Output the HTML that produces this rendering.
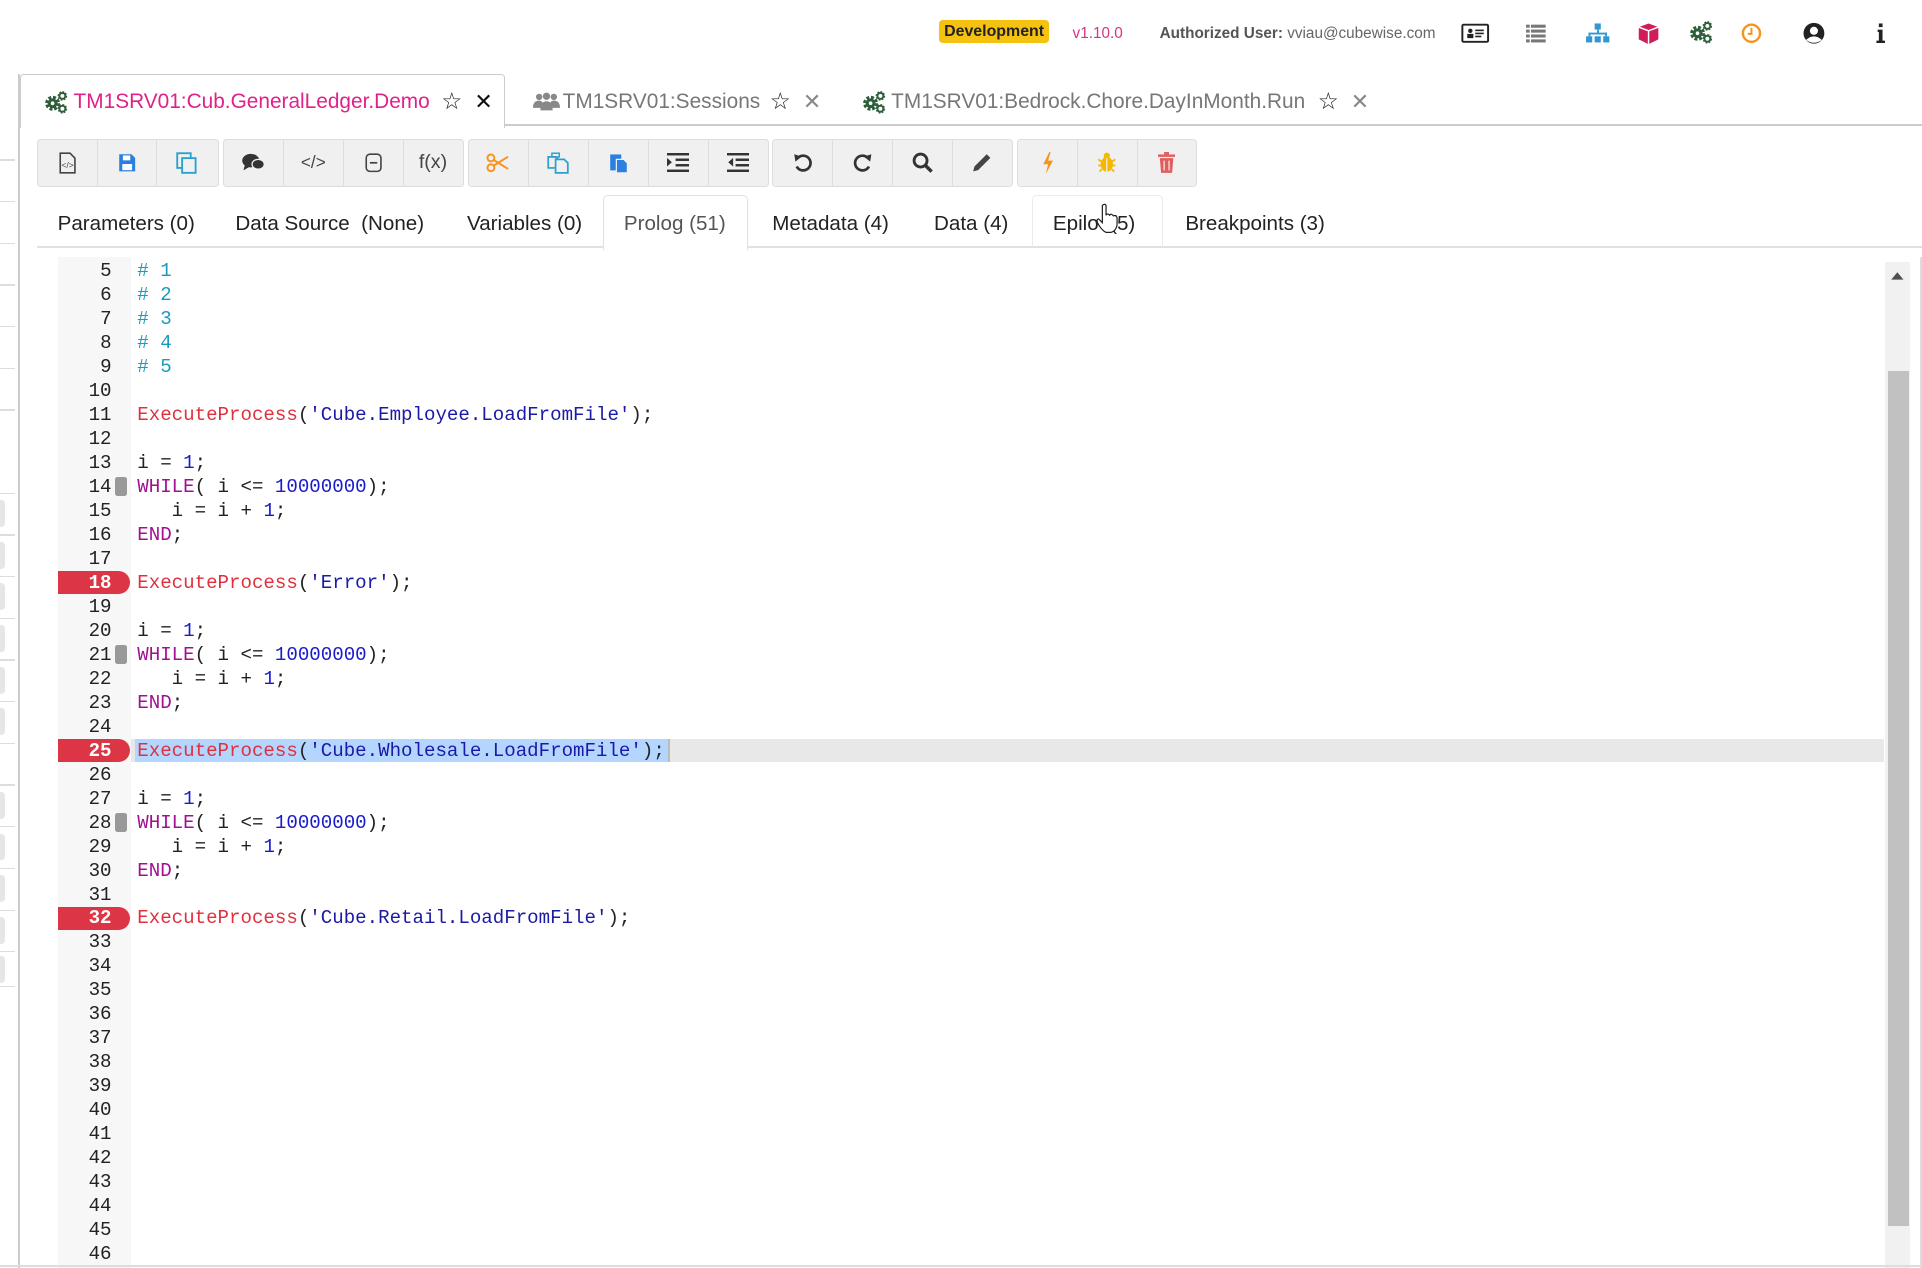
<!DOCTYPE html>
<html><head><meta charset="utf-8">
<style>
html,body{margin:0;padding:0;background:#fff;width:1922px;height:1268px;overflow:hidden}
#w{zoom:1.22577;width:1568px;height:1035px;position:relative;font-family:"Liberation Sans",sans-serif;color:#222;overflow:hidden}
.a{position:absolute}
.badge{left:766px;top:16px;width:90px;height:19px;background:#f5c211;border-radius:3px;font-weight:bold;font-size:13px;line-height:19px;text-align:center;color:#222}
.tab{font-size:17px;top:72px;line-height:22px;white-space:nowrap}
.tb{top:113px;height:38px;background:#f0f0f0;border:1px solid #ddd;border-radius:3px;display:flex}
.tb div{width:48px;border-right:1px solid #ddd;display:flex;align-items:center;justify-content:center;font-size:15px;color:#444}
.tb div:last-child{border-right:none}
.st{top:172px;font-size:16.8px;line-height:22px;color:#222;white-space:nowrap}
.code{font-family:"Liberation Mono",monospace;font-size:15.6px}
.ln{left:47px;width:44px;text-align:right;height:19.55px;line-height:19.55px;color:#222}
.cl{left:112px;height:19.55px;line-height:19.55px;white-space:pre;color:#222}
.c{color:#1b9ac0}.f{color:#e0303e}.s{color:#1a1aa6}.k{color:#a01090}.n{color:#1a1acc}
.bp{left:47px;width:59px;height:19px;background:#dc3545;border-radius:0 10px 10px 0}
.fold{left:94px;width:10px;height:16px;background:#999;border-radius:2px}
.tick{left:0;width:12px;height:1px;background:#ddd}
.box{left:0;width:4px;height:22px;background:#e6e6e6;border-radius:0 3px 3px 0}
</style></head><body><div id="w">

<svg width="0" height="0" style="position:absolute"><defs>
<g id="gears"><circle cx="7" cy="10" r="4" fill="#2e5e3a"/><circle cx="7" cy="10" r="4.8" fill="none" stroke="#2e5e3a" stroke-width="2.6" stroke-dasharray="2.4 1.4"/><circle cx="7" cy="10" r="1.5" fill="#fff"/>
<circle cx="15" cy="4" r="2.4" fill="none" stroke="#2e5e3a" stroke-width="1.6"/><circle cx="15" cy="4" r="3.2" fill="none" stroke="#2e5e3a" stroke-width="1.4" stroke-dasharray="1.4 1.1"/>
<circle cx="15" cy="14.5" r="2.4" fill="none" stroke="#2e5e3a" stroke-width="1.6"/><circle cx="15" cy="14.5" r="3.2" fill="none" stroke="#2e5e3a" stroke-width="1.4" stroke-dasharray="1.4 1.1"/></g>
</defs></svg>

<!-- header -->
<div class="a badge">Development</div>
<div class="a" style="left:875px;top:20px;font-size:12.5px;color:#d63384">v1.10.0</div>
<div class="a" style="left:946px;top:20px;font-size:12.5px;color:#666"><b style="color:#555">Authorized User:</b> vviau@cubewise.com</div>
<svg class="a" style="left:1192px;top:17px" width="360" height="20" viewBox="0 0 360 20">
 <rect x="1" y="3" width="21" height="14" fill="none" stroke="#222" stroke-width="1.6" rx="1"/><circle cx="7.5" cy="8" r="1.8" fill="#222"/><rect x="5" y="10.5" width="5" height="3.5" fill="#222"/><rect x="11.5" y="7" width="7" height="1.3" fill="#222"/><rect x="11.5" y="9.5" width="7" height="1.3" fill="#222"/><rect x="11.5" y="12" width="5" height="1.3" fill="#222"/>
 <g fill="#777"><rect x="53" y="3" width="3" height="2.5"/><rect x="57" y="3" width="12" height="2.5"/><rect x="53" y="7" width="3" height="2.5"/><rect x="57" y="7" width="12" height="2.5"/><rect x="53" y="11" width="3" height="2.5"/><rect x="57" y="11" width="12" height="2.5"/><rect x="53" y="15" width="3" height="2.5"/><rect x="57" y="15" width="12" height="2.5"/></g>
 <g fill="#2e97d4"><rect x="109" y="2" width="5" height="5"/><rect x="111" y="7" width="1.5" height="3"/><rect x="104" y="9.5" width="15" height="1.5"/><rect x="104" y="9.5" width="1.5" height="3"/><rect x="117.5" y="9.5" width="1.5" height="3"/><rect x="102" y="12.5" width="5" height="5"/><rect x="109" y="12.5" width="5" height="5"/><rect x="116" y="12.5" width="5" height="5"/></g>
 <path d="M153 2 L161 5 L161 15 L153 19 L145 15 L145 5Z" fill="#d01c5b"/><path d="M153 8 L161 5 M153 8 L145 5 M153 8 L153 19" stroke="#fff" stroke-width="1.2" fill="none"/>
 <use href="#gears" x="186" y="0"/>
 <circle cx="237" cy="10" r="7" fill="none" stroke="#f7941d" stroke-width="2"/><path d="M237 5.5 V10.5 H234" stroke="#f7941d" stroke-width="1.6" fill="none"/>
 <circle cx="288" cy="10" r="8.5" fill="#222"/><circle cx="288" cy="8" r="3.3" fill="#fff"/><path d="M281.5 15.5 Q288 9.5 294.5 15.5 Q288 20 281.5 15.5Z" fill="#fff"/>
 <rect x="341" y="2" width="3" height="3" fill="#222"/><path d="M340 7 H344 V16 H346 V18 H339 V16 H341 V9 H340Z" fill="#222"/>
</svg>

<!-- left sidebar remnants -->
<div class="a" style="left:15px;top:60px;width:1.5px;height:975px;background:#ccc"></div>
<div class="a tick" style="top:130px"></div><div class="a tick" style="top:164px"></div><div class="a tick" style="top:198px"></div><div class="a tick" style="top:232px"></div><div class="a tick" style="top:266px"></div><div class="a tick" style="top:300px"></div><div class="a tick" style="top:334px"></div><div class="a tick" style="top:402px"></div><div class="a tick" style="top:436px"></div><div class="a tick" style="top:470px"></div><div class="a tick" style="top:504px"></div><div class="a tick" style="top:538px"></div><div class="a tick" style="top:572px"></div><div class="a tick" style="top:606px"></div><div class="a tick" style="top:640px"></div><div class="a tick" style="top:674px"></div><div class="a tick" style="top:708px"></div><div class="a tick" style="top:742px"></div><div class="a tick" style="top:776px"></div><div class="a tick" style="top:804px"></div>
<div class="a box" style="top:408px"></div><div class="a box" style="top:442px"></div><div class="a box" style="top:476px"></div><div class="a box" style="top:510px"></div><div class="a box" style="top:544px"></div><div class="a box" style="top:578px"></div><div class="a box" style="top:646px"></div><div class="a box" style="top:680px"></div><div class="a box" style="top:714px"></div><div class="a box" style="top:748px"></div><div class="a box" style="top:780px"></div>

<!-- main tabs -->
<div class="a" style="left:410px;top:101px;width:1158px;height:2px;background:#ccc"></div>
<div class="a" style="left:16px;top:60px;width:394px;height:44px;border:1.5px solid #ccc;border-bottom:none;background:#fff;border-radius:3px 3px 0 0"></div>
<svg class="a" style="left:36px;top:74px" width="20" height="19"><use href="#gears"/></svg>
<div class="a tab" style="left:60px;top:73px;color:#e0218a">TM1SRV01:Cub.GeneralLedger.Demo</div>
<div class="a tab" style="left:360px;top:72px;font-size:19px">☆</div>
<div class="a tab" style="left:387px;top:73px;color:#111;font-size:18px">✕</div>
<svg class="a" style="left:435px;top:75px" width="22" height="16"><g fill="#888"><circle cx="5" cy="4" r="2.6"/><circle cx="11" cy="3.5" r="3"/><circle cx="17" cy="4" r="2.6"/><path d="M0 13 Q0 7 5 7 Q8 7 8 10 V13Z"/><path d="M6 15 Q6 7.5 11 7.5 Q16 7.5 16 15Z"/><path d="M22 13 Q22 7 17 7 Q14 7 14 10 V13Z"/></g></svg>
<div class="a tab" style="left:459px;top:73px;color:#777">TM1SRV01:Sessions</div>
<div class="a tab" style="left:628px;top:72px;font-size:19px">☆</div>
<div class="a tab" style="left:655px;top:73px;color:#888;font-size:18px">✕</div>
<svg class="a" style="left:703px;top:74px" width="20" height="19"><use href="#gears"/></svg>
<div class="a tab" style="left:727px;top:73px;color:#777">TM1SRV01:Bedrock.Chore.DayInMonth.Run</div>
<div class="a tab" style="left:1075px;top:72px;font-size:19px">☆</div>
<div class="a tab" style="left:1102px;top:73px;color:#888;font-size:18px">✕</div>

<!-- toolbar -->
<div class="a tb" style="left:30px;width:147px">
 <div><svg width="14" height="18"><path d="M1 1H9L13 5V17H1Z" fill="none" stroke="#444" stroke-width="1.3"/><text x="7" y="13" font-size="7" text-anchor="middle" fill="#444" font-family="Liberation Sans">&lt;/&gt;</text></svg></div>
 <div><svg width="15" height="16"><path d="M1 1H11L14 4V15H1Z" fill="#2a7fe0"/><rect x="4" y="2" width="6" height="4" fill="#fff"/><rect x="3.5" y="9" width="8" height="5" fill="#fff"/></svg></div>
 <div><svg width="18" height="18"><rect x="1" y="1" width="11" height="12" fill="none" stroke="#2aa0d0" stroke-width="1.5"/><rect x="5" y="5" width="11" height="12" fill="#f0f0f0" stroke="#2aa0d0" stroke-width="1.5"/></svg></div>
</div>
<div class="a tb" style="left:182px;width:195px">
 <div><svg width="20" height="17"><ellipse cx="8" cy="7" rx="7" ry="5.5" fill="#333"/><path d="M3 11 L2 15 L7 12Z" fill="#333"/><ellipse cx="14" cy="10" rx="5" ry="4" fill="#333" stroke="#f0f0f0"/></svg></div>
 <div style="font-size:14px">&lt;/&gt;</div>
 <div><svg width="14" height="16"><rect x="1" y="1" width="12" height="14" rx="3" fill="none" stroke="#444" stroke-width="1.3"/><rect x="4" y="7.3" width="6" height="1.4" fill="#444"/></svg></div>
 <div style="font-size:16px">f(x)</div>
</div>
<div class="a tb" style="left:382px;width:244px">
 <div><svg width="20" height="16"><circle cx="4" cy="4" r="2.8" fill="none" stroke="#f7941d" stroke-width="1.6"/><circle cx="4" cy="12" r="2.8" fill="none" stroke="#f7941d" stroke-width="1.6"/><path d="M6 5.5 L18 13 M6 10.5 L18 3" stroke="#f7941d" stroke-width="1.6"/></svg></div>
 <div><svg width="18" height="18"><path d="M1 4H7L9 6V13H1Z" fill="none" stroke="#2aa0d0" stroke-width="1.4"/><path d="M7 6H14L17 9V17H7Z" fill="#f0f0f0" stroke="#2aa0d0" stroke-width="1.4"/><rect x="4" y="1" width="6" height="3" fill="none" stroke="#2aa0d0" stroke-width="1.2"/></svg></div>
 <div><svg width="16" height="18"><rect x="1" y="2" width="9" height="13" fill="#2a7fe0"/><path d="M6 6H12L15 9V17H6Z" fill="#2a7fe0" stroke="#f0f0f0" stroke-width="1"/></svg></div>
 <div><svg width="18" height="16"><g fill="#333"><rect x="0" y="0" width="18" height="2"/><rect x="7" y="4.5" width="11" height="2"/><rect x="7" y="9" width="11" height="2"/><rect x="0" y="13.5" width="18" height="2"/><path d="M0 4 L4 7.5 L0 11Z"/></g></svg></div>
 <div><svg width="18" height="16"><g fill="#333"><rect x="0" y="0" width="18" height="2"/><rect x="7" y="4.5" width="11" height="2"/><rect x="7" y="9" width="11" height="2"/><rect x="0" y="13.5" width="18" height="2"/><path d="M5 4 L1 7.5 L5 11Z"/></g></svg></div>
</div>
<div class="a tb" style="left:630px;width:195px">
 <div><svg width="16" height="16"><path d="M4 4 A6 6 0 1 1 3 11" fill="none" stroke="#333" stroke-width="2.2"/><path d="M1 1 L7 3 L2 7Z" fill="#333"/></svg></div>
 <div><svg width="16" height="16"><path d="M12 4 A6 6 0 1 0 13 11" fill="none" stroke="#333" stroke-width="2.2"/><path d="M15 1 L9 3 L14 7Z" fill="#333"/></svg></div>
 <div><svg width="17" height="17"><circle cx="7" cy="7" r="5.3" fill="none" stroke="#333" stroke-width="2.3"/><path d="M11 11 L16 16" stroke="#333" stroke-width="2.8"/></svg></div>
 <div><svg width="16" height="16"><path d="M12 1 L15 4 L5 14 L1 15 L2 11Z" fill="#444"/></svg></div>
</div>
<div class="a tb" style="left:830px;width:145px">
 <div><svg width="10" height="18"><path d="M6 0 L1 10 H5 L3 18 L9 7 H5 L7 0Z" fill="#f7941d"/></svg></div>
 <div><svg width="16" height="17"><circle cx="8" cy="3" r="2.5" fill="#f5b800"/><ellipse cx="8" cy="10" rx="5" ry="6" fill="#f5b800"/><path d="M1 6 L4 8 M15 6 L12 8 M1 11 H4 M15 11 H12 M2 16 L4 14 M14 16 L12 14" stroke="#f5b800" stroke-width="1.4"/><path d="M8 5 V16" stroke="#f0f0f0"/></svg></div>
 <div><svg width="14" height="17"><rect x="0" y="2" width="14" height="2" fill="#e35d5d"/><rect x="5" y="0" width="4" height="2" fill="#e35d5d"/><path d="M1.5 5 H12.5 L11.5 17 H2.5Z" fill="#e35d5d"/><path d="M5 7 V15 M9 7 V15" stroke="#f0f0f0" stroke-width="1"/></svg></div>
</div>

<!-- sub tabs -->
<div class="a" style="left:30px;top:201px;width:1538px;height:1.5px;background:#dee2e6"></div>
<div class="a" style="left:492px;top:159px;width:117px;height:44px;border:1px solid #dee2e6;border-bottom:none;background:#fff;border-radius:4px 4px 0 0"></div>
<div class="a" style="left:842px;top:159px;width:105px;height:42px;border:1px solid #e9ecef;border-bottom:none;border-radius:4px 4px 0 0"></div>
<div class="a st" style="left:47px">Parameters (0)</div>
<div class="a st" style="left:192px">Data Source&nbsp; (None)</div>
<div class="a st" style="left:381px">Variables (0)</div>
<div class="a st" style="left:509px;color:#555">Prolog (51)</div>
<div class="a st" style="left:630px">Metadata (4)</div>
<div class="a st" style="left:762px">Data (4)</div>
<div class="a st" style="left:859px">Epilo&nbsp;&nbsp;(5)</div>
<div class="a st" style="left:967px">Breakpoints (3)</div>
<svg class="a" style="left:893px;top:166px" width="20" height="26"><path d="M6 2 Q8 0 9 2 V10 Q10 8 12 10 Q13 8 15 10.5 Q17 9.5 18 12 V18 Q17 23 13 24 H9 Q5 22 2 16 Q1 13 3 13 L6 16Z" fill="#fff" stroke="#222" stroke-width="1"/></svg>

<!-- editor -->
<div class="a" style="left:47px;top:210px;width:60px;height:825px;background:#f7f7f7"></div>
<div class="a" style="left:1538px;top:214px;width:20px;height:821px;background:#f1f1f1"></div>
<div class="a" style="left:1566px;top:210px;width:2px;height:825px;background:#ddd"></div>
<svg class="a" style="left:1542px;top:221px" width="12" height="8"><path d="M1 7 L6 1 L11 7Z" fill="#505050"/></svg>
<div class="a" style="left:1540px;top:303px;width:17px;height:697px;background:#c1c1c1"></div>
<div class="a" style="left:107px;top:602.5px;width:1430px;height:19.55px;background:#e8e8e8"></div>
<div class="a" style="left:110px;top:602.5px;width:436px;height:19.55px;background:#b4d5fe"></div>
<div class="a" style="left:545px;top:603px;width:2px;height:19px;background:#bbb"></div>

<div class="a bp" style="top:466px"></div>
<div class="a bp" style="top:603px"></div>
<div class="a bp" style="top:740px"></div>
<div class="a fold" style="top:389px"></div>
<div class="a fold" style="top:526px"></div>
<div class="a fold" style="top:663px"></div>

<div class="a code" style="left:0;top:212.5px">
<div class="a ln" style="top:0px">5</div><div class="a cl" style="top:0px"><span class="c"># 1</span></div>
<div class="a ln" style="top:19.55px">6</div><div class="a cl" style="top:19.55px"><span class="c"># 2</span></div>
<div class="a ln" style="top:39.1px">7</div><div class="a cl" style="top:39.1px"><span class="c"># 3</span></div>
<div class="a ln" style="top:58.65px">8</div><div class="a cl" style="top:58.65px"><span class="c"># 4</span></div>
<div class="a ln" style="top:78.2px">9</div><div class="a cl" style="top:78.2px"><span class="c"># 5</span></div>
<div class="a ln" style="top:97.75px">10</div>
<div class="a ln" style="top:117.3px">11</div><div class="a cl" style="top:117.3px"><span class="f">ExecuteProcess</span>(<span class="s">'Cube.Employee.LoadFromFile'</span>);</div>
<div class="a ln" style="top:136.85px">12</div>
<div class="a ln" style="top:156.4px">13</div><div class="a cl" style="top:156.4px">i = <span class="n">1</span>;</div>
<div class="a ln" style="top:175.95px">14</div><div class="a cl" style="top:175.95px"><span class="k">WHILE</span>( i &lt;= <span class="n">10000000</span>);</div>
<div class="a ln" style="top:195.5px">15</div><div class="a cl" style="top:195.5px">   i = i + <span class="n">1</span>;</div>
<div class="a ln" style="top:215.05px">16</div><div class="a cl" style="top:215.05px"><span class="k">END</span>;</div>
<div class="a ln" style="top:234.6px">17</div>
<div class="a ln" style="top:254.15px;color:#fff;font-weight:bold">18</div><div class="a cl" style="top:254.15px"><span class="f">ExecuteProcess</span>(<span class="s">'Error'</span>);</div>
<div class="a ln" style="top:273.7px">19</div>
<div class="a ln" style="top:293.25px">20</div><div class="a cl" style="top:293.25px">i = <span class="n">1</span>;</div>
<div class="a ln" style="top:312.8px">21</div><div class="a cl" style="top:312.8px"><span class="k">WHILE</span>( i &lt;= <span class="n">10000000</span>);</div>
<div class="a ln" style="top:332.35px">22</div><div class="a cl" style="top:332.35px">   i = i + <span class="n">1</span>;</div>
<div class="a ln" style="top:351.9px">23</div><div class="a cl" style="top:351.9px"><span class="k">END</span>;</div>
<div class="a ln" style="top:371.45px">24</div>
<div class="a ln" style="top:391px;color:#fff;font-weight:bold">25</div><div class="a cl" style="top:391px"><span class="f">ExecuteProcess</span>(<span class="s">'Cube.Wholesale.LoadFromFile'</span>);</div>
<div class="a ln" style="top:410.55px">26</div>
<div class="a ln" style="top:430.1px">27</div><div class="a cl" style="top:430.1px">i = <span class="n">1</span>;</div>
<div class="a ln" style="top:449.65px">28</div><div class="a cl" style="top:449.65px"><span class="k">WHILE</span>( i &lt;= <span class="n">10000000</span>);</div>
<div class="a ln" style="top:469.2px">29</div><div class="a cl" style="top:469.2px">   i = i + <span class="n">1</span>;</div>
<div class="a ln" style="top:488.75px">30</div><div class="a cl" style="top:488.75px"><span class="k">END</span>;</div>
<div class="a ln" style="top:508.3px">31</div>
<div class="a ln" style="top:527.85px;color:#fff;font-weight:bold">32</div><div class="a cl" style="top:527.85px"><span class="f">ExecuteProcess</span>(<span class="s">'Cube.Retail.LoadFromFile'</span>);</div>
<div class="a ln" style="top:547.4px">33</div>
<div class="a ln" style="top:566.95px">34</div>
<div class="a ln" style="top:586.5px">35</div>
<div class="a ln" style="top:606.05px">36</div>
<div class="a ln" style="top:625.6px">37</div>
<div class="a ln" style="top:645.15px">38</div>
<div class="a ln" style="top:664.7px">39</div>
<div class="a ln" style="top:684.25px">40</div>
<div class="a ln" style="top:703.8px">41</div>
<div class="a ln" style="top:723.35px">42</div>
<div class="a ln" style="top:742.9px">43</div>
<div class="a ln" style="top:762.45px">44</div>
<div class="a ln" style="top:782px">45</div>
<div class="a ln" style="top:801.55px">46</div>
</div>
<div class="a" style="left:0;top:1032px;width:1568px;height:2px;background:#ddd"></div>
</div></body></html>
